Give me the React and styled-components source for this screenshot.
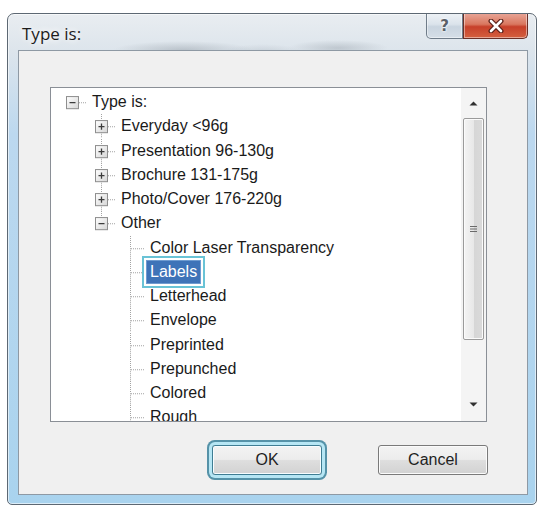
import React from "react";
import styled, { createGlobalStyle } from "styled-components";

const GlobalStyle = createGlobalStyle`
  html, body {
    margin: 0;
    padding: 0;
    background: #ffffff;
  }
  body {
    font-family: "Liberation Sans", Arial, sans-serif;
  }
`;

const Window = styled.div`
  margin: 13px 0 0 7px;
  width: 530px;
  height: 492px;
  box-sizing: border-box;
  border: 1px solid #5d6873;
  border-radius: 7px 7px 5px 5px;
  display: flex;
  flex-direction: column;
  overflow: hidden;
  background:
    radial-gradient(ellipse 70px 9px at 175px 36px, rgba(120, 130, 140, 0.35), transparent),
    radial-gradient(ellipse 50px 8px at 330px 34px, rgba(120, 130, 140, 0.3), transparent),
    radial-gradient(ellipse 40px 8px at 255px 38px, rgba(140, 150, 160, 0.25), transparent),
    linear-gradient(to bottom, #e9edf1 0px, #dde5ec 36px, #bcd8ef 120px, #a9d3ee 100%);
  box-shadow: inset 0 0 0 1px rgba(255, 255, 255, 0.6);
`;

const TitleBar = styled.div`
  height: 36px;
  flex: none;
  display: flex;
  justify-content: space-between;
  align-items: flex-start;
  padding: 0 8px 0 14px;
`;

const Title = styled.div`
  align-self: center;
  margin-top: 2px;
  font-family: "Open Sans", "Liberation Sans", sans-serif;
  font-size: 17px;
  color: #1c1c1c;
  text-shadow: 0 0 6px #ffffff, 0 0 10px #ffffff;
`;

const CaptionButtons = styled.div`
  display: flex;
  margin-top: -1px;
`;

const CaptionButton = styled.div`
  height: 26px;
  width: ${(p) => p.$width}px;
  box-sizing: border-box;
  display: flex;
  align-items: center;
  justify-content: center;
  border: 1px solid ${(p) => (p.$close ? "#6a2f27" : "#6f7c89")};
  border-top: none;
  border-radius: ${(p) => (p.$close ? "0 0 5px 0" : "0 0 0 5px")};
  background: ${(p) =>
    p.$close
      ? "linear-gradient(to bottom, #e9a799 0%, #d9775f 45%, #c7402a 55%, #d4603f 100%)"
      : "linear-gradient(to bottom, #eef2f6 0%, #dbe3eb 45%, #c9d4df 55%, #d5dee7 100%)"};
  box-shadow: inset 0 0 0 1px rgba(255, 255, 255, 0.45);
`;

const HelpGlyph = styled.span`
  font-family: "DejaVu Sans", sans-serif;
  font-weight: bold;
  font-size: 15px;
  color: #5a6068;
  text-shadow: 0 0 2px #ffffff, 0 0 3px #ffffff;
`;

const Client = styled.div`
  flex: 1;
  margin: 0 8px 9px 10px;
  background: #f0f0f0;
  border: 1px solid #8e99a4;
  display: flex;
  flex-direction: column;
`;

const TreeBox = styled.div`
  margin: 36px 0 0 31px;
  width: 437px;
  height: 335px;
  box-sizing: border-box;
  border: 1px solid #8a8f96;
  background: #ffffff;
  display: flex;
`;

const TreeArea = styled.div`
  flex: 1;
  overflow: hidden;
  padding: 2px 0 0 7px;
`;

const Row = styled.div`
  height: 24.25px;
  display: flex;
  align-items: center;
  font-size: 16px;
  color: #1a1a1a;
  white-space: nowrap;
`;

const Cell = styled.svg`
  width: 29px;
  height: 24.25px;
  flex: none;
  display: block;
`;

const Label = styled.span`
  margin-left: 2px;
  padding: 1px 3px;
  line-height: 20px;
  ${(p) =>
    p.$selected &&
    `
    background: #3e73b8;
    color: #ffffff;
    box-shadow: 0 0 0 1px #6f9bd0, 0 0 0 3px #ffffff, 0 0 0 5px #69c3d6;
  `}
`;

const ScrollBar = styled.div`
  width: 25px;
  flex: none;
  background: #f4f4f4;
  display: flex;
  flex-direction: column;
  align-items: center;
`;

const ArrowButton = styled.div`
  height: ${(p) => p.$h}px;
  width: 100%;
  display: flex;
  align-items: ${(p) => (p.$down ? "flex-end" : "center")};
  padding-bottom: ${(p) => (p.$down ? "14px" : "0")};
  box-sizing: border-box;
  justify-content: center;
`;

const Thumb = styled.div`
  width: 21px;
  height: 222px;
  box-sizing: border-box;
  border: 1px solid #9b9b9b;
  border-radius: 2px;
  background: linear-gradient(to right, #f4f4f4 0%, #e8e8e8 50%, #d6d6d6 51%, #dadada 100%);
  box-shadow: inset 0 0 0 1px #fbfbfb;
  display: flex;
  align-items: center;
  justify-content: center;
`;

const Track = styled.div`
  flex: 1;
`;

const ButtonRow = styled.div`
  display: flex;
  gap: 56px;
  margin-top: 23px;
  padding-left: 193px;
`;

const DialogButton = styled.button`
  width: 110px;
  height: 30px;
  box-sizing: border-box;
  border: 1px solid ${(p) => (p.$default ? "#3f7d93" : "#7a7a7a")};
  border-radius: 3px;
  background: linear-gradient(to bottom, #f3f3f3 0%, #ececec 48%, #dedede 52%, #d2d2d2 100%);
  font-family: "Liberation Sans", Arial, sans-serif;
  font-size: 16px;
  color: #1f1f1f;
  padding: 0;
  box-shadow: ${(p) =>
    p.$default
      ? "inset 0 0 0 1px #f8fdff, 0 0 0 3px #b6e6f4, 0 0 0 5px #5592a8"
      : "inset 0 0 0 1px #fbfbfb"};
`;

const Expander = ({ minus }) => (
  <g>
    <defs>
      <linearGradient id="exp" x1="0" y1="0" x2="1" y2="1">
        <stop offset="0" stopColor="#ffffff" />
        <stop offset="1" stopColor="#d6d6d6" />
      </linearGradient>
    </defs>
    <rect x="8.5" y="6.5" width="12" height="12" fill="url(#exp)" stroke="#8e8e8e" />
    <line x1="11.5" y1="12.5" x2="17.5" y2="12.5" stroke="#3c3c3c" strokeWidth="1.3" />
    {!minus && <line x1="14.5" y1="9.5" x2="14.5" y2="15.5" stroke="#3c3c3c" strokeWidth="1.3" />}
  </g>
);

const TreeCell = ({ vertical, stub, expander }) => (
  <Cell viewBox="0 0 29 24" preserveAspectRatio="none">
    {vertical === "full" && (
      <line x1="14.5" y1="0" x2="14.5" y2="24" stroke="#a3a3a3" strokeDasharray="1 1" />
    )}
    {vertical === "top" && (
      <line x1="14.5" y1="0" x2="14.5" y2="12.5" stroke="#a3a3a3" strokeDasharray="1 1" />
    )}
    {stub && <line x1="15" y1="12.5" x2="29" y2="12.5" stroke="#a3a3a3" strokeDasharray="1 1" />}
    {expander && <Expander minus={expander === "minus"} />}
  </Cell>
);

const rows = [
  { text: "Type is:", cells: [{ stub: true, expander: "minus" }] },
  { text: "Everyday <96g", cells: [{}, { vertical: "full", stub: true, expander: "plus" }] },
  { text: "Presentation 96-130g", cells: [{}, { vertical: "full", stub: true, expander: "plus" }] },
  { text: "Brochure 131-175g", cells: [{}, { vertical: "full", stub: true, expander: "plus" }] },
  { text: "Photo/Cover 176-220g", cells: [{}, { vertical: "full", stub: true, expander: "plus" }] },
  { text: "Other", cells: [{}, { vertical: "top", stub: true, expander: "minus" }] },
  ...[
    "Color Laser Transparency",
    "Labels",
    "Letterhead",
    "Envelope",
    "Preprinted",
    "Prepunched",
    "Colored",
    "Rough",
  ].map((text) => ({
    text,
    selected: text === "Labels",
    cells: [{}, {}, { vertical: "full", stub: true }],
  })),
];

const TriangleUp = () => (
  <svg width="9" height="5" viewBox="0 0 9 5">
    <path d="M0.5 4.5 L4.5 0.5 L8.5 4.5 Z" fill="#303030" />
  </svg>
);

const TriangleDown = () => (
  <svg width="9" height="5" viewBox="0 0 9 5">
    <path d="M0.5 0.5 L4.5 4.5 L8.5 0.5 Z" fill="#303030" />
  </svg>
);

const Grip = () => (
  <svg width="7" height="8" viewBox="0 0 7 8">
    <line x1="0" y1="1.5" x2="7" y2="1.5" stroke="#6a6a6a" />
    <line x1="0" y1="4" x2="7" y2="4" stroke="#6a6a6a" />
    <line x1="0" y1="6.5" x2="7" y2="6.5" stroke="#6a6a6a" />
  </svg>
);

const CloseGlyph = () => (
  <svg width="18" height="14" viewBox="0 0 18 14">
    <path d="M4 2 L14 12 M14 2 L4 12" stroke="#5b2018" strokeWidth="5" strokeLinecap="round" />
    <path d="M4 2 L14 12 M14 2 L4 12" stroke="#ffffff" strokeWidth="2.6" strokeLinecap="round" />
  </svg>
);

export default function App() {
  return (
    <>
      <GlobalStyle />
      <Window>
        <TitleBar>
          <Title>Type is:</Title>
          <CaptionButtons>
            <CaptionButton $width={37}>
              <HelpGlyph>?</HelpGlyph>
            </CaptionButton>
            <CaptionButton $width={65} $close>
              <CloseGlyph />
            </CaptionButton>
          </CaptionButtons>
        </TitleBar>
        <Client>
          <TreeBox>
            <TreeArea>
              {rows.map((row) => (
                <Row key={row.text}>
                  {row.cells.map((c, i) => (
                    <TreeCell key={i} {...c} />
                  ))}
                  <Label $selected={row.selected}>{row.text}</Label>
                </Row>
              ))}
            </TreeArea>
            <ScrollBar>
              <ArrowButton $h={30}>
                <TriangleUp />
              </ArrowButton>
              <Thumb>
                <Grip />
              </Thumb>
              <Track />
              <ArrowButton $h={30} $down>
                <TriangleDown />
              </ArrowButton>
            </ScrollBar>
          </TreeBox>
          <ButtonRow>
            <DialogButton $default>OK</DialogButton>
            <DialogButton>Cancel</DialogButton>
          </ButtonRow>
        </Client>
      </Window>
    </>
  );
}
